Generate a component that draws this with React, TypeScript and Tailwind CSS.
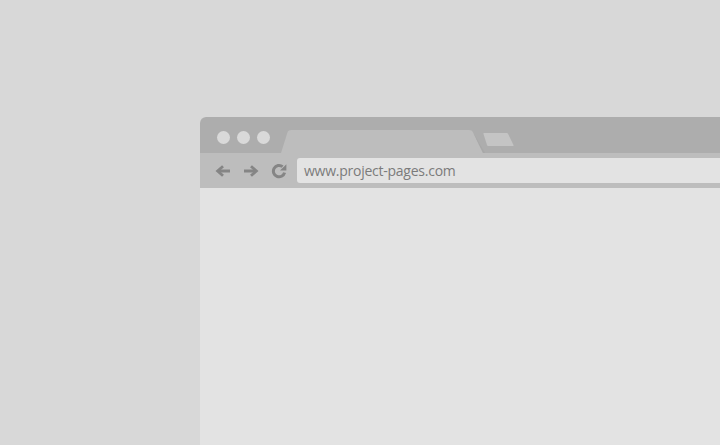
import React from "react";

const dots = [0, 1, 2];

function BackArrow() {
  return (
    <svg width="16" height="12" viewBox="0 0 16 12" fill="none">
      <path d="M15 6H3" stroke="#858585" strokeWidth="2.8" />
      <path d="M8 1.2 2.6 6 8 10.8" stroke="#858585" strokeWidth="2.8" />
    </svg>
  );
}

function ForwardArrow() {
  return (
    <svg width="16" height="12" viewBox="0 0 16 12" fill="none">
      <path d="M1 6h12" stroke="#858585" strokeWidth="2.8" />
      <path d="M8 1.2 13.4 6 8 10.8" stroke="#858585" strokeWidth="2.8" />
    </svg>
  );
}

function Reload() {
  return (
    <svg width="16" height="16" viewBox="0 0 16 16" fill="none">
      <path d="M13.6 9.6A5.7 5.7 0 1 1 11.6 3.6" stroke="#858585" strokeWidth="3" />
      <path d="M15.4 1.2V7.6H9z" fill="#858585" />
    </svg>
  );
}

function Tabs() {
  return (
    <svg width="236" height="23" viewBox="0 0 236 23">
      <path d="M0 23 6.2 3.2C6.8 1.2 8 0 10.5 0H188c2.5 0 3.6 1.1 4.3 3L202 23z" fill="#bdbdbd" />
      <path d="M192.3 3 202 23h2z" fill="#a4a4a4" opacity="0.5" />
      <path d="M203 3h22.5c.8 0 1.2.3 1.6 1l5.5 11.2c.3.6 0 .8-.6.8H207.5c-.8 0-1.2-.3-1.5-1l-3.6-11.2c-.2-.5.1-.8.6-.8z" fill="#c4c4c4" />
    </svg>
  );
}

export default function App() {
  return (
    <div className="w-[720px] h-[445px] bg-[#d8d8d8] overflow-hidden flex flex-col pt-[117px] pl-[200px]">
      <div className="flex-1 flex flex-col rounded-tl-[6px] overflow-hidden bg-[#e3e3e3]">
        <div className="h-[36px] bg-[#adadad] flex items-start pl-[17px]">
          <div className="flex gap-[7px] mt-[14px]">
            {dots.map((d) => (
              <span key={d} className="w-[13px] h-[13px] rounded-full bg-[#d9d9d9]" />
            ))}
          </div>
          <div className="self-end ml-[11px] flex">
            <Tabs />
          </div>
        </div>
        <div className="h-[35px] bg-[#bdbdbd] flex items-center pl-[15px] py-[5px]">
          <div className="flex items-center gap-[12px] w-[82px]">
            <BackArrow />
            <ForwardArrow />
            <Reload />
          </div>
          <div className="flex-1 h-[25px] bg-[#e3e3e3] rounded-l-[3px] flex items-center pl-[7px] text-[14px] tracking-[-0.25px] text-[#7b7b7b] font-['Open_Sans',sans-serif]">
            www.project-pages.com
          </div>
        </div>
        <div className="flex-1 bg-[#e3e3e3]" />
      </div>
    </div>
  );
}
